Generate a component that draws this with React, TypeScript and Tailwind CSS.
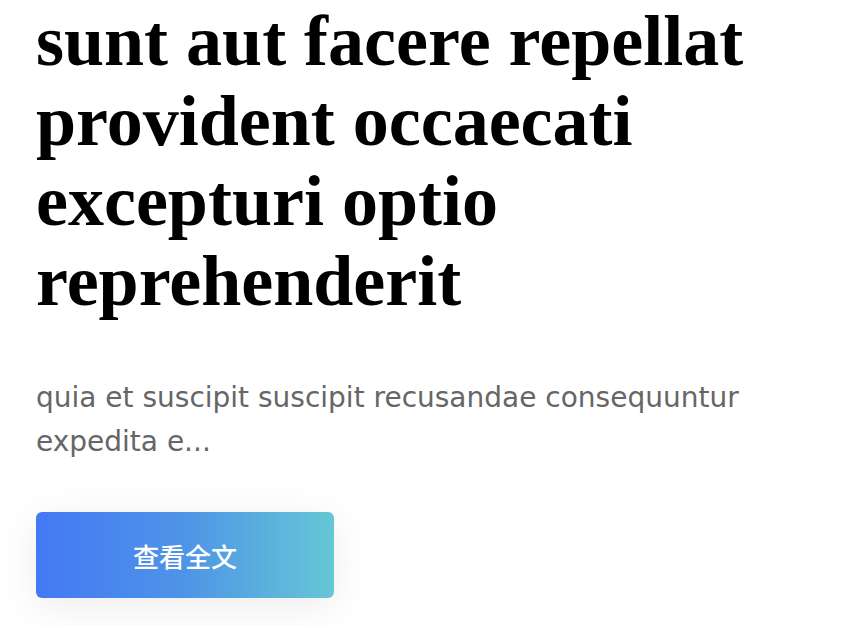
export default function App() {
  return (
    <div className="min-h-[626px] w-[856px] bg-white px-9 pt-px">
      <h1 className="m-0 w-[760px] text-[72px] font-bold leading-[80px] text-black [font-family:'Liberation_Serif',serif]">
        sunt aut facere repellat provident occaecati excepturi optio reprehenderit
      </h1>
      <p className="mt-[55px] w-[760px] text-[28px] leading-[44px] text-[#666666] [font-family:'DejaVu_Sans',sans-serif]">
        quia et suscipit suscipit recusandae consequuntur expedita e...
      </p>
      <button className="mt-[48px] flex h-[86px] w-[298px] items-center justify-center rounded-[6px] bg-gradient-to-r from-[#4478f5] via-[#4f94e6] to-[#66c7d4] text-[26px] font-medium text-white shadow-[0_8px_40px_rgba(0,0,0,0.08)] [font-family:'Noto_Sans_CJK_SC',sans-serif]">
        查看全文
      </button>
    </div>
  );
}
